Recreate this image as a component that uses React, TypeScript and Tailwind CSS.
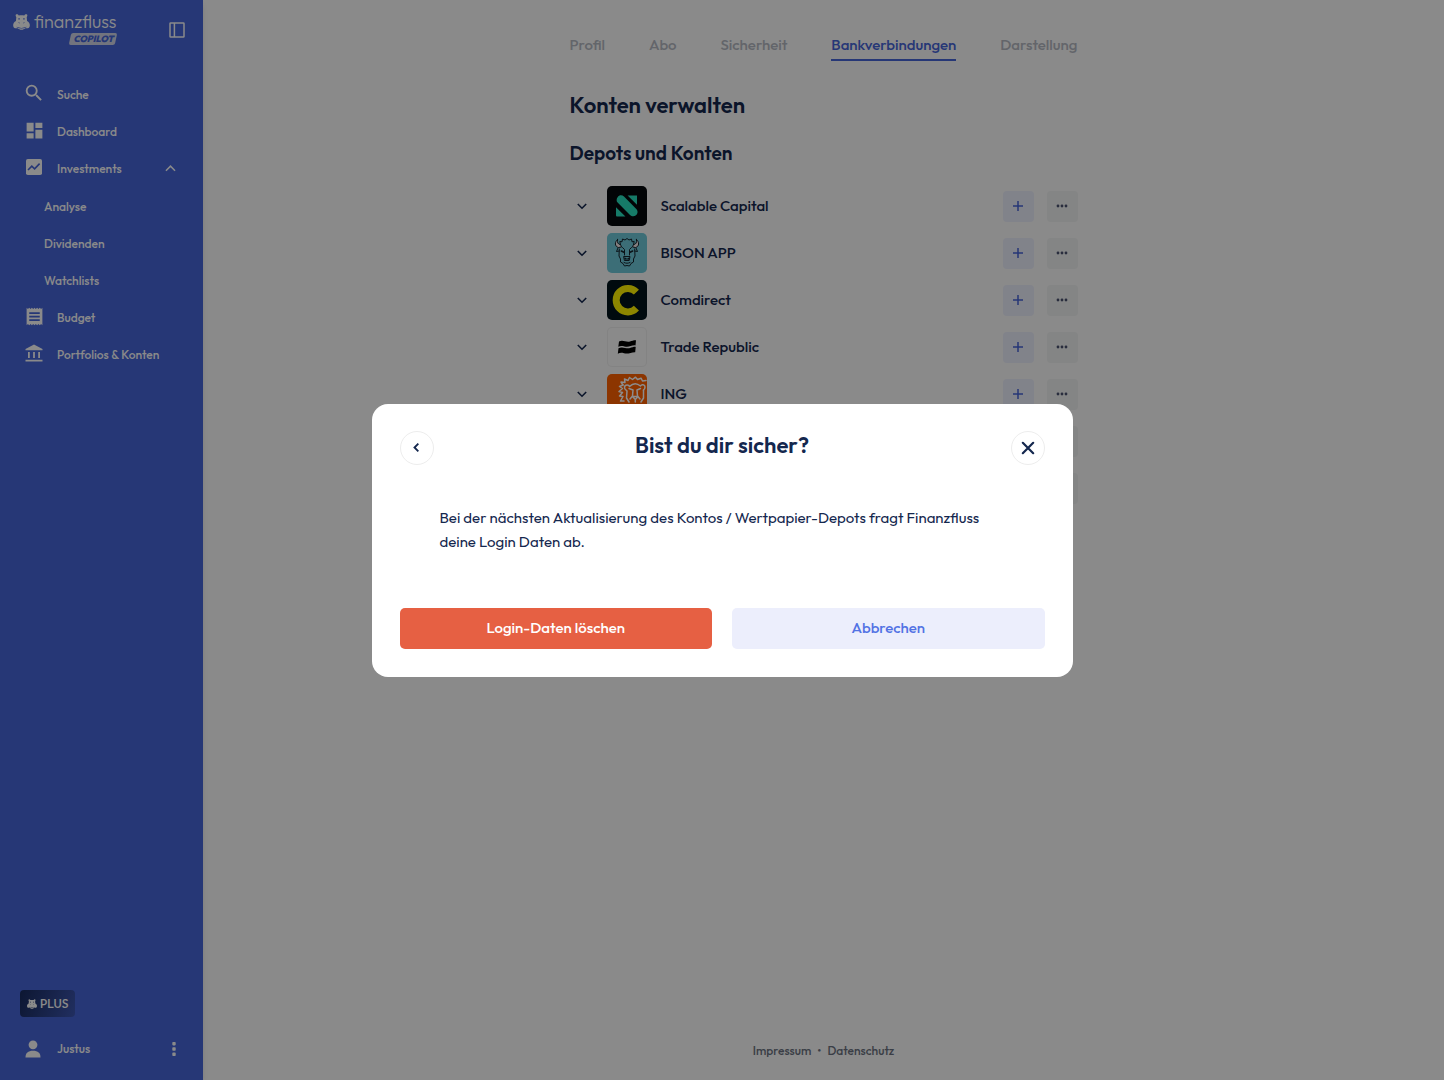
import type { ReactNode } from 'react'
import clsx from 'clsx'
import { MdDashboard, MdReceipt, MdSearch } from 'react-icons/md'

function HippoIcon({ className }: { className?: string }) {
    return (
        <svg viewBox="0 0 48 46" className={className} fill="currentColor" aria-hidden="true">
            <path
                fillRule="evenodd"
                d="M9 1 C12 0 15 2 16 4 C21 3 27 3 32 4 C33 1 37 0 39 1 C42 3 41 6 39 9 L40 20 C45 22 48 27 48 32 C48 39 43 42 37 41 C34 41 32 43 30 44 C26 46 22 46 18 44 C16 43 14 41 11 41 C5 42 0 39 0 32 C0 27 3 22 8 20 L9 9 C7 6 6 3 9 1 Z M15 12 V16 H19 V12 Z M29 12 V16 H33 V12 Z M15 24 L18 27 L19 26 L16 23 Z M33 24 L30 27 L29 26 L32 23 Z M10 37 C20 41 28 41 38 37 L38 38 C28 43 20 43 10 38 Z"
            />
        </svg>
    )
}

function SidebarIcon() {
    return (
        <svg viewBox="0 0 16 16" className="size-4" fill="none" stroke="currentColor" strokeWidth="1.5" aria-hidden="true">
            <rect x="1" y="1" width="14" height="14" rx="0.6" />
            <path d="M5.4 1 V15" />
        </svg>
    )
}

function InvestmentsIcon() {
    return (
        <svg viewBox="0 0 16 16" className="size-4" aria-hidden="true">
            <rect width="16" height="16" rx="1.8" fill="currentColor" />
            <path d="M2 11 L5.8 7.2 L8.6 9.9 L13.6 4.6" fill="none" stroke="#4564d8" strokeWidth="1.6" />
        </svg>
    )
}

function BankIcon() {
    return (
        <svg viewBox="0 0 18 18" className="size-[18px]" fill="currentColor" aria-hidden="true">
            <path d="M9 0.5 L17.5 5 V6.3 H0.5 V5 Z M3 8 H4.8 V14 H3 Z M8.1 8 H9.9 V14 H8.1 Z M13.2 8 H15 V14 H13.2 Z M0.5 15.7 H17.5 V17.4 H0.5 Z" />
        </svg>
    )
}

function ChevronIcon({ className }: { className?: string }) {
    return (
        <svg viewBox="0 0 12 12" className={className} fill="none" stroke="currentColor" aria-hidden="true">
            <path d="M1.8 4 L6 8.2 L10.2 4" />
        </svg>
    )
}

const navItems: { label: string; icon?: ReactNode; open?: boolean }[] = [
    { label: 'Suche', icon: <MdSearch className="size-[22px] shrink-0" /> },
    { label: 'Dashboard', icon: <MdDashboard className="size-[21px] shrink-0" /> },
    { label: 'Investments', icon: <InvestmentsIcon />, open: true },
    { label: 'Analyse' },
    { label: 'Dividenden' },
    { label: 'Watchlists' },
    { label: 'Budget', icon: <MdReceipt className="size-[21px] shrink-0" /> },
    { label: 'Portfolios & Konten', icon: <BankIcon /> },
]

function Sidebar() {
    return (
        <aside className="z-10 flex w-[203px] shrink-0 flex-col bg-[#4564d8] text-xs font-medium text-[#fbfbfb] shadow-md">
            <div className="flex h-[76px] items-start justify-between pt-3 pr-[18px] pl-[13px]">
                <a href="#" className="flex flex-col items-end">
                    <span className="flex items-center gap-1">
                        <HippoIcon className="h-4 w-[17px]" />
                        <span className="text-[18px] leading-5 font-light">finanzfluss</span>
                    </span>
                    <span className="relative z-0 mt-px px-[3px] text-[9px] leading-3 font-black text-[#4564d8] italic before:absolute before:inset-0 before:-z-10 before:-skew-x-12 before:rounded-xs before:bg-[#d0d4e6]">
                        COPILOT
                    </span>
                </a>
                <button type="button" aria-label="Menü" className="mt-[10px]">
                    <SidebarIcon />
                </button>
            </div>

            <nav className="flex flex-col">
                {navItems.map((item) => (
                    <a
                        key={item.label}
                        href="#"
                        className={clsx('flex h-[37px] items-center pr-[26px]', item.icon ? 'pl-6' : 'pl-11', item.open && 'mb-px')}
                    >
                        {item.icon && <span className="mr-[13px] mb-[3px] flex w-5 justify-center">{item.icon}</span>}
                        <span className="flex-1 whitespace-nowrap">{item.label}</span>
                        {item.open && <ChevronIcon className="size-[13px] rotate-180 stroke-[1.4]" />}
                    </a>
                ))}
            </nav>

            <div className="mt-auto flex flex-col items-start px-5 pb-[22px]">
                <span className="flex h-[27px] items-center gap-[3px] rounded bg-linear-110 from-[#182a5c] to-[#3d56b0] px-[7px] text-xs">
                    <HippoIcon className="h-[10px] w-[10px]" />
                    PLUS
                </span>
                <div className="mt-[23px] flex w-full items-center pl-1">
                    <svg viewBox="0 0 18 18" className="mr-[15px] size-[18px]" fill="currentColor" aria-hidden="true">
                        <circle cx="9" cy="4.8" r="4.4" />
                        <path d="M1.5 17.5 C1.5 13 4 10.8 9 10.8 C14 10.8 16.5 13 16.5 17.5 Z" />
                    </svg>
                    <span className="flex-1">Justus</span>
                    <button type="button" aria-label="Kontomenü" className="mr-[7px]">
                        <svg viewBox="0 0 4 16" className="h-4 w-1" fill="currentColor" aria-hidden="true">
                            <rect x="0.3" y="1" width="3.4" height="3.4" rx="0.8" />
                            <rect x="0.3" y="6.3" width="3.4" height="3.4" rx="0.8" />
                            <rect x="0.3" y="11.6" width="3.4" height="3.4" rx="0.8" />
                        </svg>
                    </button>
                </div>
            </div>
        </aside>
    )
}

function ScalableLogo() {
    return (
        <svg viewBox="0 0 40 40" className="size-full" aria-hidden="true">
            <rect width="40" height="40" fill="#05080c" />
            <g fill="#28e0bd">
                <path d="M10.6 11.2 C12.2 8.8 15.2 8.8 17 10.6 L29.3 23 C31.3 25 30.7 28 29 29.3 C27 30.9 24.5 30.4 23 29 L10.6 16.6 C9.2 15.2 9.4 12.8 10.6 11.2 Z" />
                <path d="M20.6 9.5 H30 V18.8 Z" />
                <path d="M9 21.2 L18.4 30.5 H10 Q9 30.5 9 29.5 Z" />
            </g>
        </svg>
    )
}

function BisonLogo() {
    return (
        <svg viewBox="0 0 40 40" className="size-full" aria-hidden="true">
            <rect width="40" height="40" fill="#6dc8d9" />
            <g fill="none" stroke="#16232c" strokeWidth="1" strokeLinejoin="round" strokeLinecap="round">
                <path d="M10.5 6.5 C7.5 9 7.5 13.5 11.5 14.5 L14.5 14 L13.5 11.5 C11 11.5 10 9.5 10.5 6.5 Z" fill="#f4e9ea" />
                <path d="M29.5 6.5 C32.5 9 32.5 13.5 28.5 14.5 L25.5 14 L26.5 11.5 C29 11.5 30 9.5 29.5 6.5 Z" fill="#f4e9ea" />
                <path d="M13.5 11.5 L12.8 8.5 L15 8.8 L15.5 6 L18 7 L20 5.5 L22 7 L24.5 6 L25 8.8 L27.2 8.5 L26.5 11.5" />
                <path d="M11 15 L9.5 18.5 L12.3 18 M29 15 L30.5 18.5 L27.7 18" />
                <path d="M12.3 16 L12 23 L13.5 26 L13.5 29 L16 30.5 L17.5 33 L20 32.5 L22.5 33 L24 30.5 L26.5 29 L26.5 26 L28 23 L27.7 16" />
                <path d="M15.5 14.5 L17.5 16.5 L17.5 22 M24.5 14.5 L22.5 16.5 L22.5 22 M17 23.5 H23 L22.2 27.5 H17.8 Z" />
                <path d="M14.3 18 L17 19.3 M25.7 18 L23 19.3 M18 25.3 L19 26 M22 25.3 L21 26" strokeWidth="1.6" />
                <path d="M17 29.5 C19 30.5 21 30.5 23 29.5" />
            </g>
        </svg>
    )
}

function ComdirectLogo() {
    return (
        <svg viewBox="0 0 40 40" className="size-full" aria-hidden="true">
            <rect width="40" height="40" fill="#00131a" />
            <path d="M29.4 12.2 A11.7 11.7 0 1 0 29.4 28.2" fill="none" stroke="#fff500" strokeWidth="7" />
        </svg>
    )
}

function TradeRepublicLogo() {
    return (
        <svg viewBox="0 0 40 40" className="size-full" aria-hidden="true">
            <g fill="#000">
                <path d="M12 14.5 C16 12.3 19 15.6 23 14.4 C25 13.8 27 13 29 13.2 L28.5 18.4 C24 18 22 20.7 17.5 19.4 C15 18.8 13 18.8 11.3 19.7 Z" />
                <path d="M11.5 21.2 C16 19 19 22.3 23 21.1 C25 20.5 27 19.7 28.7 19.9 L28.2 25.2 C24 25 21.5 27.5 17 26.2 C14.5 25.6 12.5 25.8 10.8 26.7 Z" />
            </g>
        </svg>
    )
}

function IngLogo() {
    return (
        <svg viewBox="0 0 40 40" className="size-full" aria-hidden="true">
            <rect width="40" height="40" fill="#ff6200" />
            <g fill="none" stroke="#fff" strokeWidth="1.5" strokeLinecap="round" strokeLinejoin="round">
                <path d="M16 11 L14 8 L18 8.5 L17.5 5 L21 6.5 L22.5 3.5 L25.5 5.5 L28.5 3.2 L30.5 5.5 L34 4.2 L35.5 7 L39 6.5" />
                <path d="M16 11 L12.5 12.5 L15.5 14.5 L12 17.5 L15.5 18.5 L12.5 22 L16 22.5 L13.5 27 L17 27" />
                <path d="M19.5 16.5 C16.5 15 17 11 20 11 C22 11 22.5 12.5 22.5 12.5 C26 9 30 9 33.5 12 C34.5 10 38 10.5 38 13 C38 15 36.5 16 36.5 16" />
                <path d="M22 14.5 L26 16 L25.5 22 L23 25 M33.5 14.5 L30 16 L30.5 22 L33 25 M25.5 22.5 H31 L28.3 25.5 Z M28.3 25.5 V28 M20 17 L19.5 24 L22 28 M36.5 16 L36.5 24 L34 28" />
            </g>
        </svg>
    )
}

const accounts: { name: string; logo: ReactNode }[] = [
    { name: 'Scalable Capital', logo: <ScalableLogo /> },
    { name: 'BISON APP', logo: <BisonLogo /> },
    { name: 'Comdirect', logo: <ComdirectLogo /> },
    { name: 'Trade Republic', logo: <TradeRepublicLogo /> },
    { name: 'ING', logo: <IngLogo /> },
    // still loading
    { name: '', logo: null },
    { name: '', logo: null },
]

const tabs = ['Profil', 'Abo', 'Sicherheit', 'Bankverbindungen', 'Darstellung']

function Settings() {
    return (
        <div className="flex min-w-0 flex-1 flex-col items-center bg-[#fbfbfb] text-[#14274e]">
            <main className="w-full max-w-[508px]">
                <nav className="flex items-start justify-between pt-[33px] text-[15px] leading-6 font-medium text-[#b4b8c2]">
                    {tabs.map((tab) => (
                        <a
                            key={tab}
                            href="#"
                            className={clsx('border-b-2 pb-0.5', tab === 'Bankverbindungen' ? 'border-[#4564d8] text-[#4564d8]' : 'border-transparent')}
                        >
                            {tab}
                        </a>
                    ))}
                </nav>

                <h1 className="mt-7 text-[22px] leading-8 font-semibold">Konten verwalten</h1>
                <h2 className="mt-[18px] text-[19px] leading-7 font-semibold">Depots und Konten</h2>

                <ul className="mt-[19px] flex flex-col gap-[7px]">
                    {accounts.map((account, i) => (
                        <li key={i} className="flex h-10 items-center">
                            <button type="button" aria-label={account.name} className="mr-[19px] ml-[6px]">
                                <ChevronIcon className="size-3 stroke-[1.6]" />
                            </button>
                            <span className="size-10 overflow-hidden rounded-[5px] ring-1 ring-[#eeeeee] ring-inset">{account.logo}</span>
                            <span className="ml-[14px] flex-1 text-[15px] font-medium">{account.name}</span>
                            <button type="button" aria-label="Hinzufügen" className="mr-[13px] flex size-[31px] items-center justify-center rounded bg-[#eceefc] text-[#4564d8]">
                                <svg viewBox="0 0 12 12" className="size-3" stroke="currentColor" strokeWidth="1.5" aria-hidden="true">
                                    <path d="M6 1 V11 M1 6 H11" />
                                </svg>
                            </button>
                            <button type="button" aria-label="Mehr" className="flex size-[31px] items-center justify-center rounded bg-[#f0f2f2] text-[#4b5270]">
                                <svg viewBox="0 0 12 4" className="h-1 w-3" fill="currentColor" aria-hidden="true">
                                    <circle cx="2" cy="2" r="1.4" />
                                    <circle cx="6" cy="2" r="1.4" />
                                    <circle cx="10" cy="2" r="1.4" />
                                </svg>
                            </button>
                        </li>
                    ))}
                </ul>
            </main>

            <footer className="mt-auto flex gap-[6px] pb-[19px] text-xs leading-5 font-medium text-[#6b7280]">
                <a href="#">Impressum</a>
                <span>•</span>
                <a href="#">Datenschutz</a>
            </footer>
        </div>
    )
}

function ConfirmDialog() {
    return (
        <div className="fixed inset-0 z-20 flex items-center justify-center bg-black/45">
            <div role="dialog" aria-modal="true" aria-labelledby="confirm-title" className="w-full max-w-[701px] rounded-2xl bg-white px-7 pt-[27px] pb-7 text-[#14274e]">
                <div className="flex items-start justify-between">
                    <button type="button" aria-label="Zurück" className="flex size-[34px] items-center justify-center rounded-full border border-[#ededed]">
                        <ChevronIcon className="size-[11px] rotate-90 stroke-2" />
                    </button>
                    <h2 id="confirm-title" className="text-[22px] leading-7 font-semibold">Bist du dir sicher?</h2>
                    <button type="button" aria-label="Schließen" className="flex size-[34px] items-center justify-center rounded-full border border-[#ededed]">
                        <svg viewBox="0 0 14 14" className="size-[14px]" stroke="currentColor" strokeWidth="2.2" strokeLinecap="round" aria-hidden="true">
                            <path d="M1.8 1.8 L12.2 12.2 M12.2 1.8 L1.8 12.2" />
                        </svg>
                    </button>
                </div>
                <p className="mt-[41px] px-10 text-[15px] leading-6">
                    Bei der nächsten Aktualisierung des Kontos / Wertpapier-Depots fragt Finanzfluss deine Login Daten ab.
                </p>
                <div className="mt-[54px] grid grid-cols-2 gap-5 text-[15px] font-medium">
                    <button type="button" className="h-[41px] rounded-[5px] bg-[#e66043] text-white">Login-Daten löschen</button>
                    <button type="button" className="h-[41px] rounded-[5px] bg-[#eceefc] text-[#5272e4]">Abbrechen</button>
                </div>
            </div>
        </div>
    )
}

export default function App() {
    return (
        <div className="flex min-h-screen font-['Outfit','Lato',sans-serif]">
            <Sidebar />
            <Settings />
            <ConfirmDialog />
        </div>
    )
}
